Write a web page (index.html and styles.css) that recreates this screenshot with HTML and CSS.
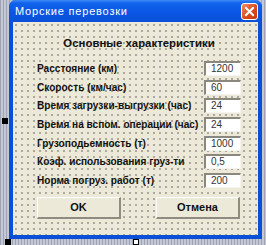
FILE: index.html
```html
<!DOCTYPE html>
<html lang="ru">
<head>
    <meta charset="UTF-8">
    <title>Морские перевозки</title>
    <link rel="stylesheet" href="styles.css">
</head>
<body>

<div class="desktop">
    <div class="window">
        <div class="titlebar">
            <span class="title">Морские перевозки</span>
            <span class="close">
                <svg width="11" height="11" viewBox="0 0 11 11">
                    <path d="M2 2 L9 9 M9 2 L2 9" stroke="#fff" stroke-width="2" stroke-linecap="square"/>
                </svg>
            </span>
        </div>

        <div class="client">
            <h1>Основные характеристики</h1>

            <div class="rows">
                <div class="row"><label>Расстояние (км)</label><div class="field">1200</div></div>
                <div class="row"><label>Скорость (км/час)</label><div class="field">60</div></div>
                <div class="row"><label>Время загрузки-выгрузки (час)</label><div class="field">24</div></div>
                <div class="row"><label>Время на вспом. операции (час)</label><div class="field">24</div></div>
                <div class="row"><label>Грузоподьемность (т)</label><div class="field">1000</div></div>
                <div class="row"><label>Коэф. использования груз-ти</label><div class="field">0,5</div></div>
                <div class="row"><label>Норма погруз. работ (т)</label><div class="field">200</div></div>
            </div>

            <div class="buttons">
                <button>OK</button>
                <button>Отмена</button>
            </div>
        </div>
    </div>

    <!-- маркеры выделения формы -->
    <span class="handle handle-left"></span>
    <span class="handle handle-bottom"></span>
    <span class="handle handle-mid"></span>
</div>

</body>
</html>
```

FILE: styles.css
```css
body {
    margin: 0;
    font-family: "Liberation Sans", Arial, sans-serif;
}
.desktop {
    position: relative;
    width: 266px;
    height: 245px;
    background-color: #c4c8d4;
    background-image: repeating-linear-gradient(90deg, #9ea3b4 0 1px, transparent 1px 3px);
    overflow: hidden;
}
.window {
    margin-left: 9px;
    width: 253px;
    height: 239px;
    display: flex;
    flex-direction: column;
    background: #0a4fd8;
    border-radius: 7px 7px 0 0;
}
.titlebar {
    height: 22px;
    display: flex;
    align-items: center;
    justify-content: space-between;
    padding: 0 4px 0 6px;
    border-radius: 7px 7px 0 0;
    background: linear-gradient(#3c8cf4 0, #1163ec 3px, #0a56e4 12px, #0b50d8 100%);
}
.title {
    color: white;
    font-size: 11px;
    letter-spacing: 0.8px;
}
.close {
    width: 15px;
    height: 15px;
    display: flex;
    justify-content: center;
    align-items: center;
    border: 1px solid white;
    border-radius: 3px;
    background: linear-gradient(135deg, #f08c62, #dc4a1c 55%, #c33a12);
}
.client {
    flex: 1;
    margin: 0 4px 4px 4px;
    background-color: #ece9d8;
    background-image: radial-gradient(circle at 1px 1px, #aaa79c 0.7px, transparent 1px);
    background-size: 6px 6px;
    background-position: 2px 2px;
    padding: 0 17px 0 24px;
}
h1 {
    margin: 14px 0 8px 0;
    text-align: center;
    font-size: 11.4px;
    line-height: 15px;
    color: #111;
}
.rows {
    display: flex;
    flex-direction: column;
}
.row {
    height: 18.7px;
    display: flex;
    align-items: center;
    justify-content: space-between;
}
.row label {
    font-size: 10.1px;
    font-weight: bold;
    color: #111;
    white-space: nowrap;
}
.field {
    width: 29px;
    height: 12px;
    padding-left: 5px;
    font-size: 10px;
    line-height: 12px;
    color: #333;
    background: white;
    border-top: 2px solid #8a877c;
    border-left: 2px solid #8a877c;
    border-bottom: 1px solid #f4f3ee;
    border-right: 1px solid #f4f3ee;
}
.buttons {
    display: flex;
    justify-content: space-between;
    margin-top: 7px;
    padding-right: 1px;
}
.buttons button {
    width: 84px;
    height: 22px;
    font-family: "Liberation Sans", Arial, sans-serif;
    font-size: 11px;
    font-weight: bold;
    color: #111;
    background: #ece9d8;
    border-top: 1px solid #fff;
    border-left: 1px solid #fff;
    border-bottom: 2px solid #8e8b80;
    border-right: 2px solid #8e8b80;
    padding: 0;
}
.handle {
    position: absolute;
    width: 4px;
    height: 4px;
    background: #000;
    border: 1px solid #000;
}
.handle-left {
    left: 2px;
    top: 118px;
}
.handle-bottom {
    left: 5px;
    top: 239px;
}
.handle-mid {
    left: 133px;
    top: 239px;
    background: white;
}
```
